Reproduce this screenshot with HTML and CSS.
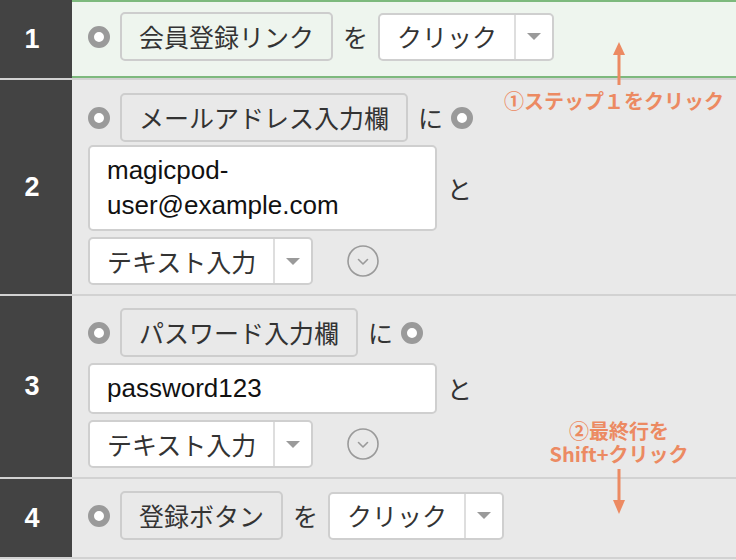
FILE: index.html
```html
<!DOCTYPE html>
<html lang="ja">
<head>
<meta charset="utf-8">
<title>Steps</title>
<link rel="stylesheet" href="styles.css">
</head>
<body>
<div class="list">
  <div class="step">
    <div class="num">1</div>
    <div class="body active b1">
      <div class="line">
        <span class="radio"></span>
        <span class="chip">会員登録リンク</span>
        <span class="word">を</span>
        <span class="select"><span class="val">クリック</span><span class="arr"><span class="tri"></span></span></span>
      </div>
    </div>
  </div>

  <div class="step">
    <div class="num">2</div>
    <div class="body b2">
      <div class="line">
        <span class="radio"></span>
        <span class="chip">メールアドレス入力欄</span>
        <span class="word w-ni">に</span>
        <span class="radio"></span>
      </div>
      <div class="line l-input">
        <span class="input">magicpod-<br>user@example.com</span>
        <span class="word w-to">と</span>
      </div>
      <div class="line l-sel">
        <span class="select"><span class="val">テキスト入力</span><span class="arr"><span class="tri"></span></span></span>
        <svg class="more" width="32" height="32" viewBox="0 0 32 32"><circle cx="16" cy="16" r="15" fill="none" stroke="#9a9a9a" stroke-width="1.6"/><path d="M11.5 14.5 L16 19 L20.5 14.5" fill="none" stroke="#9a9a9a" stroke-width="1.6" stroke-linecap="round" stroke-linejoin="round"/></svg>
      </div>
    </div>
  </div>

  <div class="step">
    <div class="num">3</div>
    <div class="body b3">
      <div class="line">
        <span class="radio"></span>
        <span class="chip">パスワード入力欄</span>
        <span class="word w-ni">に</span>
        <span class="radio"></span>
      </div>
      <div class="line l-input3">
        <span class="input">password123</span>
        <span class="word w-to">と</span>
      </div>
      <div class="line l-sel3">
        <span class="select"><span class="val">テキスト入力</span><span class="arr"><span class="tri"></span></span></span>
        <svg class="more" width="32" height="32" viewBox="0 0 32 32"><circle cx="16" cy="16" r="15" fill="none" stroke="#9a9a9a" stroke-width="1.6"/><path d="M11.5 14.5 L16 19 L20.5 14.5" fill="none" stroke="#9a9a9a" stroke-width="1.6" stroke-linecap="round" stroke-linejoin="round"/></svg>
      </div>
    </div>
  </div>

  <div class="step">
    <div class="num">4</div>
    <div class="body b4">
      <div class="line">
        <span class="radio"></span>
        <span class="chip">登録ボタン</span>
        <span class="word">を</span>
        <span class="select"><span class="val">クリック</span><span class="arr"><span class="tri"></span></span></span>
      </div>
    </div>
  </div>

  <svg class="arrow arrow-up" width="16" height="44" viewBox="0 0 16 44"><path d="M8 0 L14 13 L2 13 Z" fill="#ec8a62"/><rect x="6.5" y="11" width="3" height="32" fill="#ec8a62"/></svg>
  <div class="note note1">①ステップ１をクリック</div>

  <div class="note note2"><div class="nl">②最終行を</div><div class="nl">Shift+クリック</div></div>
  <svg class="arrow arrow-down" width="16" height="46" viewBox="0 0 16 46"><rect x="6.5" y="0" width="3" height="33" fill="#ec8a62"/><path d="M8 45 L14 31 L2 31 Z" fill="#ec8a62"/></svg>
</div>
</body>
</html>
```

FILE: styles.css
```css
html, body {
  margin: 0;
  padding: 0;
  background: #e9e9e9;
}
body {
  width: 736px;
  height: 560px;
  overflow: hidden;
  font-family: "Noto Sans CJK JP", "Liberation Sans", sans-serif;
  color: #333;
}
.list {
  position: relative;
  width: 736px;
}
.step {
  display: flex;
  border-bottom: 2px solid #d2d2d2;
}
.num {
  width: 72px;
  flex: none;
  box-sizing: border-box;
  padding-right: 8px;
  background: #434343;
  color: #fff;
  font-family: "Liberation Sans", sans-serif;
  font-weight: bold;
  font-size: 27px;
  display: flex;
  align-items: center;
  justify-content: center;
}
.body {
  flex: 1;
  background: #e9e9e9;
  padding-left: 16px;
  display: flex;
  flex-direction: column;
}
.body.active {
  background: #eef5ee;
  border-top: 2px solid #7db97d;
  border-bottom: 2px solid #7db97d;
}
.b1 { padding-top: 10px; padding-bottom: 15px; }
.b2 { padding-top: 13px; padding-bottom: 9px; }
.b3 { padding-top: 12px; padding-bottom: 9px; }
.b4 { padding-top: 12px; padding-bottom: 17px; }

.line {
  display: flex;
  align-items: center;
}
.l-input { margin-top: 3px; }
.l-sel { margin-top: 6px; }
.l-input3 { margin-top: 6px; }
.l-sel3 { margin-top: 6px; }

.radio {
  width: 22px;
  height: 22px;
  box-sizing: border-box;
  border-radius: 50%;
  border: 6px solid #9a9a9a;
  background: #fff;
  flex: none;
  margin-right: 10px;
}
.chip {
  height: 49px;
  box-sizing: border-box;
  border: 2px solid #cdcdcd;
  border-radius: 5px;
  padding: 0 17px;
  display: flex;
  align-items: center;
  font-size: 25px;
  line-height: 1;
  color: #333;
}
.word {
  font-size: 25px;
  line-height: 1;
  margin: 0 10px;
  color: #333;
}
.w-ni { margin: 0 8px 0 10px; }
.w-to { margin-left: 10px; }
.select {
  height: 48px;
  box-sizing: border-box;
  border: 2px solid #cfcfcf;
  border-radius: 5px;
  background: #fff;
  display: flex;
}
.select .val {
  padding: 0 17px;
  display: flex;
  align-items: center;
  font-size: 25px;
  line-height: 1;
  color: #333;
  border-right: 2px solid #dedede;
}
.select .arr {
  width: 36px;
  display: flex;
  align-items: center;
  justify-content: center;
}
.tri {
  width: 0;
  height: 0;
  border-left: 7px solid transparent;
  border-right: 7px solid transparent;
  border-top: 7px solid #9a9a9a;
}
.input {
  width: 349px;
  box-sizing: border-box;
  border: 2px solid #cfcfcf;
  border-radius: 5px;
  background: #fff;
  padding: 6px 17px;
  font-family: "Liberation Sans", Arial, sans-serif;
  font-size: 26px;
  line-height: 35px;
  color: #111;
}
.more {
  margin-left: 34px;
  flex: none;
}
.note {
  position: absolute;
  color: #ec8a62;
  font-weight: bold;
  font-size: 20px;
  line-height: 24px;
  white-space: nowrap;
}
.note1 {
  left: 504px;
  top: 89px;
}
.note2 {
  left: 539px;
  top: 419px;
  width: 160px;
  text-align: center;
}
.note2 .nl {
  height: 23px;
  line-height: 23px;
}
.arrow {
  position: absolute;
}
.arrow-up {
  left: 611px;
  top: 42px;
}
.arrow-down {
  left: 611px;
  top: 469px;
}
```
